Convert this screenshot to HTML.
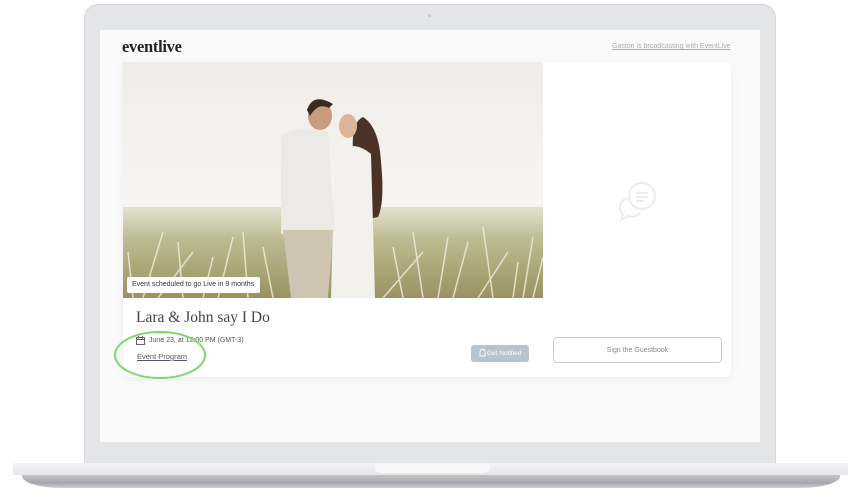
<!DOCTYPE html>
<html><head><meta charset="utf-8"><style>
*{margin:0;padding:0;box-sizing:border-box}
body{width:850px;height:498px;background:#fff;position:relative;overflow:hidden;font-family:"Liberation Sans",sans-serif}
.lid{position:absolute;left:84px;top:4px;width:692px;height:462px;border-radius:14px 14px 0 0;background:#e4e5e7;border:1px solid #d4d5d8}
.screen{position:absolute;left:100px;top:30px;width:660px;height:412px;background:#fafafa}
.base{position:absolute;left:13px;top:463px;width:835px;height:12px;background:linear-gradient(#f3f3f4,#e4e5e7);border-radius:2px 2px 0 0}
.base2{position:absolute;left:22px;top:475px;width:818px;height:13px;background:linear-gradient(#c4c5c8,#a6a7ab 60%,#cdced0);border-radius:0 0 40px 40px/0 0 12px 12px}
.notch{position:absolute;left:375px;top:463px;width:115px;height:10px;background:#f8f8f9;border-radius:0 0 6px 6px}
.logo{position:absolute;left:122px;top:37px;font-family:"Liberation Serif",serif;font-weight:bold;font-size:16.5px;color:#222;letter-spacing:-0.3px}
.bc{position:absolute;left:612px;top:43px;font-size:7px;color:#a9acb0;text-decoration:underline;white-space:nowrap}
.card{position:absolute;left:123px;top:62px;width:608px;height:315px;background:#fff;box-shadow:0 2px 10px rgba(0,0,0,.06);border-radius:0 6px 6px 6px}
.photo{position:absolute;left:123px;top:62px;width:420px;height:236px}
.badge{position:absolute;left:127px;top:277px;width:133px;height:16px;background:#fff;border-radius:2px;font-size:7px;color:#333;padding:4px 0 0 5px;white-space:nowrap;overflow:hidden}
.title{position:absolute;left:136px;top:309px;font-family:"Liberation Serif",serif;font-size:15.5px;color:#444}
.date{position:absolute;left:149px;top:337px;font-size:7px;color:#555;white-space:nowrap}
.prog{position:absolute;left:137px;top:352px;font-size:7.5px;color:#556;text-decoration:underline}
.gn{position:absolute;left:471px;top:345px;width:58px;height:17px;background:#b8c3cd;border-radius:3px;color:#fff;font-size:6.5px;padding:5px 0 0 16px;white-space:nowrap}
.gb{position:absolute;left:553px;top:337px;width:169px;height:26px;border:1px solid #c9cdd1;border-radius:4px;font-size:7px;color:#888;text-align:center;padding-top:9px}
</style></head><body>
<div class="lid"></div>
<div style="position:absolute;left:428px;top:14px;width:3px;height:3px;border-radius:50%;background:#c8c8cc"></div>
<div class="screen"></div>
<div class="base"></div><div class="notch"></div><div class="base2"></div>
<div class="logo">eventlive</div>
<div class="bc">Gaston is broadcasting with EventLive</div>
<div class="card"></div>
<svg class="photo" viewBox="0 0 420 236">
<defs>
<linearGradient id="sky" x1="0" y1="0" x2="0" y2="1"><stop offset="0" stop-color="#f0ede8"/><stop offset="1" stop-color="#fbfaf8"/></linearGradient>
<linearGradient id="gr" x1="0" y1="0" x2="0" y2="1"><stop offset="0" stop-color="#e3e2d0"/><stop offset=".35" stop-color="#bdbb92"/><stop offset="1" stop-color="#9a9260"/></linearGradient>
</defs>
<rect width="420" height="236" fill="url(#sky)"/>
<rect y="145" width="420" height="91" fill="url(#gr)"/>
<g stroke="#efeadb" stroke-width="1.5" opacity=".85" fill="none">
<path d="M20 236 L40 170 M60 236 L55 180 M95 236 L110 175 M300 236 L290 170 M330 236 L345 180 M370 236 L360 165 M400 236 L410 175 M260 236 L300 190 M150 236 L140 185 M10 236 L5 190 M35 236 L70 190 M125 236 L120 170 M315 236 L325 175 M355 236 L385 190 M390 236 L395 200 M410 236 L420 195 M280 236 L270 185 M80 236 L90 195"/>
</g>
<path d="M255 155 Q262 140 258 100 Q256 65 240 55 Q228 60 230 90 L232 160Z" fill="#4a3326"/>
<path d="M212 88 Q232 78 248 92 L252 236 L208 236Z" fill="#f3f1ec"/>
<path d="M158 72 Q182 62 205 70 L212 170 L158 172Z" fill="#eceae5"/>
<path d="M160 168 L210 168 L205 236 L168 236Z" fill="#cdc5b2"/>
<ellipse cx="225" cy="64" rx="9" ry="12" fill="#dcb69c"/>
<ellipse cx="197" cy="54" rx="12" ry="14" fill="#c99c7f"/>
<path d="M184 48 Q190 30 210 42 L206 46 Q195 40 187 54Z" fill="#3b2a20"/>
</svg>
<div class="badge">Event scheduled to go Live in 9 months</div>
<svg style="position:absolute;left:616px;top:180px" width="46" height="42" viewBox="0 0 46 42" fill="none" stroke="#ececec" stroke-width="2"><path d="M12 18 Q4 20 4 28 Q4 32 7 34 L5 40 L12 36 Q20 38 24 33"/><circle cx="26" cy="16" r="13"/><path d="M20 13h12M20 17h12M20 21h8"/></svg>
<div class="title">Lara &amp; John say I Do</div>
<svg style="position:absolute;left:136px;top:336px" width="9" height="9" viewBox="0 0 9 9" fill="none" stroke="#555" stroke-width=".9"><rect x=".5" y="1.5" width="8" height="7"/><path d="M.5 3.5h8M2.5 0v2.5M6.5 0v2.5"/></svg>
<div class="date">June 23, at 12:00 PM (GMT-3)</div>
<div class="prog">Event Program</div>
<svg style="position:absolute;left:112px;top:329px" width="96" height="52"><ellipse cx="48" cy="26" rx="45" ry="23" fill="none" stroke="#7fd66a" stroke-width="2"/></svg>
<div class="gn">Get Notified</div>
<svg style="position:absolute;left:479px;top:349px" width="7" height="9" viewBox="0 0 7 9" fill="none" stroke="#fff" stroke-width=".9"><path d="M1 7V3Q1 .5 3.5 .5Q6 .5 6 3V7H.3"/></svg>
<div class="gb">Sign the Guestbook</div>
</body></html>
